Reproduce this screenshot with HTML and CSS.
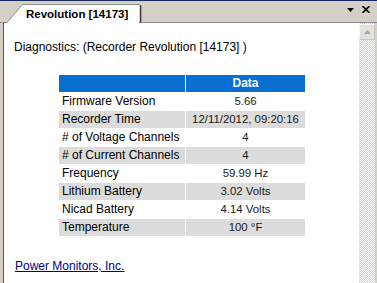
FILE: index.html
```html
<!DOCTYPE html>
<html lang="en">
<head>
    <meta charset="UTF-8">
    <title>Revolution [14173]</title>
    <link rel="stylesheet" href="styles.css">
</head>
<body>
    <div class="window">
        <div class="tab-strip">
            <div class="tab">
                <svg class="tab-shape" width="137" height="19" viewBox="0 0 137 19">
                    <path d="M0.5 19 L16.5 0.5 H133 V19 Z" fill="#fff"/>
                    <path d="M0.5 19 L16.5 0.5 H133.5" fill="none" stroke="#8e8e8e"/>
                    <path d="M134.5 1 V19" stroke="#404040"/>
                    <path d="M135.5 2 V19" stroke="#9a9a9a"/>
                </svg>
                <span class="tab-label">Revolution [14173]</span>
            </div>
            <div class="strip-buttons">
                <svg width="7" height="4" viewBox="0 0 7 4"><path d="M0 0 H7 L3.5 4 Z" fill="#000"/></svg>
                <svg width="8" height="7" viewBox="0 0 8 7"><path d="M0.5 0 L7.5 7 M7.5 0 L0.5 7" stroke="#000" stroke-width="1.6"/></svg>
            </div>
        </div>
        <div class="pane">
            <div class="content">
                <p class="title">Diagnostics: (Recorder Revolution [14173] )</p>
                <table class="diag-table">
                    <tr class="head">
                        <th class="label-col"></th>
                        <th>Data</th>
                    </tr>
                    <tr><td class="label">Firmware Version</td><td class="value">5.66</td></tr>
                    <tr class="alt"><td class="label">Recorder Time</td><td class="value">12/11/2012, 09:20:16</td></tr>
                    <tr><td class="label"># of Voltage Channels</td><td class="value">4</td></tr>
                    <tr class="alt"><td class="label"># of Current Channels</td><td class="value">4</td></tr>
                    <tr><td class="label">Frequency</td><td class="value">59.99 Hz</td></tr>
                    <tr class="alt"><td class="label">Lithium Battery</td><td class="value">3.02 Volts</td></tr>
                    <tr><td class="label">Nicad Battery</td><td class="value">4.14 Volts</td></tr>
                    <tr class="alt"><td class="label">Temperature</td><td class="value">100 °F</td></tr>
                </table>
                <a class="company" href="#">Power Monitors, Inc.</a>
            </div>
            <div class="scrollbar">
                <div class="scroll-up">
                    <svg width="7" height="4" viewBox="0 0 7 4"><path d="M3.5 0 L7 4 H0 Z" fill="#a5a5a5"/></svg>
                </div>
            </div>
        </div>
    </div>
</body>
</html>
```

FILE: styles.css
```css
html, body {
    margin: 0;
    padding: 0;
}

body {
    width: 377px;
    height: 283px;
    overflow: hidden;
    font-family: "Liberation Sans", Arial, sans-serif;
    background-color: #d4d0c8;
}

.window {
    display: flex;
    flex-direction: column;
    height: 283px;
    border-top: 1px solid #1a2a5e;
    box-sizing: border-box;
}

.tab-strip {
    display: flex;
    align-items: flex-end;
    height: 21px;
    border-bottom: 1px solid #8a8a8a;
}

.tab {
    position: relative;
    width: 137px;
    height: 19px;
    margin-left: 6px;
    margin-bottom: -1px;
}

.tab-shape {
    position: absolute;
    left: 0;
    top: 0;
}

.tab-label {
    position: relative;
    display: block;
    padding-left: 20px;
    line-height: 18px;
    padding-top: 1px;
    font-size: 11.5px;
    font-weight: bold;
    color: #000;
}

.strip-buttons {
    display: flex;
    align-items: center;
    gap: 8px;
    margin-left: auto;
    margin-right: 7px;
    height: 21px;
    padding-bottom: 4px;
    box-sizing: border-box;
}

.pane {
    flex: 1;
    display: flex;
    margin-left: 3px;
    margin-right: 2px;
    border-left: 1px solid #555;
    min-height: 0;
}

.content {
    flex: 1;
    background-color: #fff;
    padding: 17px 0 0 10px;
}

.title {
    margin: 0;
    font-size: 12px;
    line-height: 14px;
    color: #000;
}

.diag-table {
    margin: 20px 0 0 44px;
    border-spacing: 1px;
    font-size: 12px;
}

.diag-table th,
.diag-table td {
    height: 17px;
    padding: 0;
    line-height: 17px;
}

.diag-table th {
    background-color: #0a6fd2;
    color: #fff;
    font-weight: bold;
    text-align: center;
}

.label-col {
    width: 126px;
}

.label {
    padding-left: 3px !important;
    color: #000;
}

.value {
    width: 119px;
    text-align: center;
    white-space: nowrap;
    color: #1a1a1a;
    font-size: 11.4px;
}

.alt td {
    background-color: #dcdcdc;
}

.company {
    display: block;
    margin: 22px 0 0 1px;
    font-size: 12px;
    line-height: 14px;
    color: #000080;
}

.scrollbar {
    width: 16px;
    background-color: #eceae4;
    background-image: conic-gradient(#d4d0c8 25%, #fff 0 50%, #d4d0c8 0 75%, #fff 0);
    background-size: 2px 2px;
}

.scroll-up {
    display: flex;
    align-items: center;
    justify-content: center;
    height: 14px;
    margin-top: 1px;
    background-color: #e4e2dc;
    border: 1px solid #c8c6c0;
    border-top-color: #f4f4f4;
    border-left-color: #f4f4f4;
}
```
